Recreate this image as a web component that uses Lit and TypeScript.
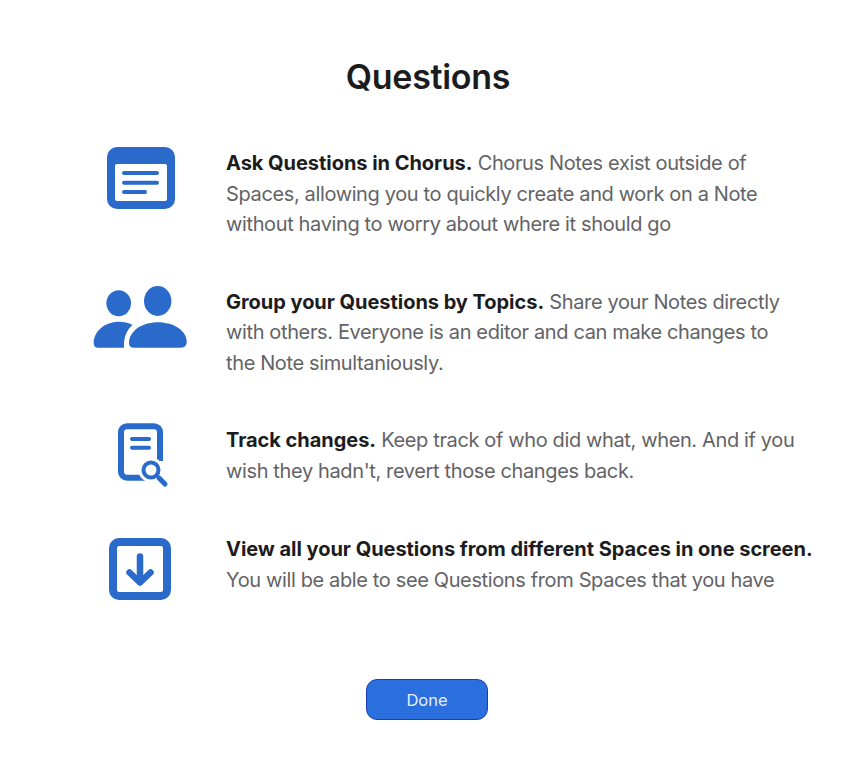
import { LitElement, html, css, svg } from 'lit';
import { customElement } from 'lit/decorators.js';

const BLUE = '#2a6acb';

// Each icon is drawn in a 94x62 box so the column lines up
const noteIcon = svg`
  <rect x="14" y="-1" width="68" height="62" rx="10" fill="${BLUE}"/>
  <rect x="22" y="16" width="52" height="37" rx="2" fill="#fff"/>
  <g stroke="${BLUE}" stroke-width="4" stroke-linecap="round">
    <line x1="31" y1="25" x2="64" y2="25"/>
    <line x1="31" y1="34.700" x2="64" y2="34.700"/>
    <line x1="31" y1="44" x2="52" y2="44"/>
  </g>`;

const peopleIcon = svg`
  <g fill="${BLUE}">
    <ellipse cx="25.700" cy="16.300" rx="12.300" ry="13"/>
    <ellipse cx="64.700" cy="14" rx="13.700" ry="15"/>
    <path d="M0.700 56 C0.700 44 12 34.700 26 34.700 C31 34.700 35.500 35.800 39.500 38 C33.500 43 30.500 51 31 60.700 L5 60.700 C2 60.700 0.700 59 0.700 56 Z"/>
    <path d="M36 56 C36 44 49 35.300 65 35.300 C81 35.300 93.700 44 93.700 55 C93.700 59 91 60.700 88 60.700 L41 60.700 C37.500 60.700 36 59 36 56 Z"/>
  </g>`;

const trackIcon = svg`
  <rect x="28" y="1.200" width="39" height="51.500" rx="6" fill="none" stroke="${BLUE}" stroke-width="6"/>
  <circle cx="58" cy="45" r="12.500" fill="#fff"/>
  <path d="M67 36 L74 36 L74 60 L50 60 Z" fill="#fff"/>
  <g fill="none" stroke="${BLUE}" stroke-linecap="round">
    <line x1="39" y1="14" x2="56" y2="14" stroke-width="4"/>
    <line x1="39" y1="22.700" x2="56" y2="22.700" stroke-width="4"/>
    <circle cx="58" cy="45" r="7.500" stroke-width="4"/>
    <line x1="66" y1="53" x2="72" y2="59" stroke-width="5"/>
  </g>`;

const downIcon = svg`
  <rect x="20" y="4" width="54" height="54" rx="6" fill="none" stroke="${BLUE}" stroke-width="8"/>
  <g fill="none" stroke="${BLUE}" stroke-width="6.500" stroke-linecap="round" stroke-linejoin="round">
    <line x1="47" y1="18.500" x2="47" y2="44"/>
    <path d="M36.500 34.500 L47 44.500 L57.500 34.500"/>
  </g>`;

const rows = [
  {
    icon: noteIcon,
    title: 'Ask Questions in Chorus.',
    lines: [
      ' Chorus Notes exist outside of',
      'Spaces, allowing you to quickly create and work on a Note',
      'without having to worry about where it should go',
    ],
  },
  {
    icon: peopleIcon,
    title: 'Group your Questions by Topics.',
    lines: [
      ' Share your Notes directly',
      'with others. Everyone is an editor and can make changes to',
      'the Note simultaniously.',
    ],
  },
  {
    icon: trackIcon,
    title: 'Track changes.',
    lines: [
      ' Keep track of who did what, when. And if you',
      "wish they hadn't, revert those changes back.",
    ],
  },
  {
    icon: downIcon,
    title: 'View all your Questions from different Spaces in one screen.',
    lines: ['', 'You will be able to see Questions from Spaces that you have'],
    low: true,
  },
];

@customElement('app-root')
export class AppRoot extends LitElement {
  static styles = css`
    :host {
      display: block;
      height: 782px;
      background: #ffffff;
      font-family: 'Inter', 'Liberation Sans', sans-serif;
      overflow: hidden;
    }
    .page {
      display: flex;
      flex-direction: column;
      align-items: center;
      padding-top: 55px;
    }
    h1 {
      margin: 0;
      font-size: 34px;
      line-height: 44px;
      font-weight: 600;
      color: #1c1c1e;
      letter-spacing: -0.3px;
    }
    .list {
      align-self: stretch;
      display: flex;
      flex-direction: column;
      gap: 47px;
      padding: 49px 0 0 93px;
    }
    .row {
      display: flex;
      gap: 39px;
    }
    .icon {
      flex: none;
      width: 94px;
      height: 62px;
      overflow: visible;
    }
    .icon.low {
      margin-top: 4px;
    }
    p {
      margin: 0;
      font-size: 20px;
      line-height: 30.5px;
      color: #636366;
      white-space: nowrap;
      letter-spacing: -0.37px;
    }
    b {
      font-weight: 700;
      color: #1c1c1e;
      letter-spacing: -0.04px;
    }
    button {
      margin: 79px 2px 0 0;
      width: 122px;
      height: 41px;
      border: 1.5px solid #1a3fb5;
      border-radius: 11px;
      background: #2b6fde;
      color: #e4eefc;
      font: 400 16.5px 'Inter', 'Liberation Sans', sans-serif;
    }
  `;

  render() {
    return html`
      <div class="page">
        <h1>Questions</h1>
        <div class="list">
          ${rows.map(
            (r) => html`
              <div class="row">
                <svg class="icon ${r.low ? 'low' : ''}" viewBox="0 0 94 62">${r.icon}</svg>
                <p>
                  <b>${r.title}</b>${r.lines[0]}<br />${r.lines.slice(1).map(
                    (l, i) => html`${i > 0 ? html`<br />` : ''}${l}`
                  )}
                </p>
              </div>
            `
          )}
        </div>
        <button>Done</button>
      </div>
    `;
  }
}
